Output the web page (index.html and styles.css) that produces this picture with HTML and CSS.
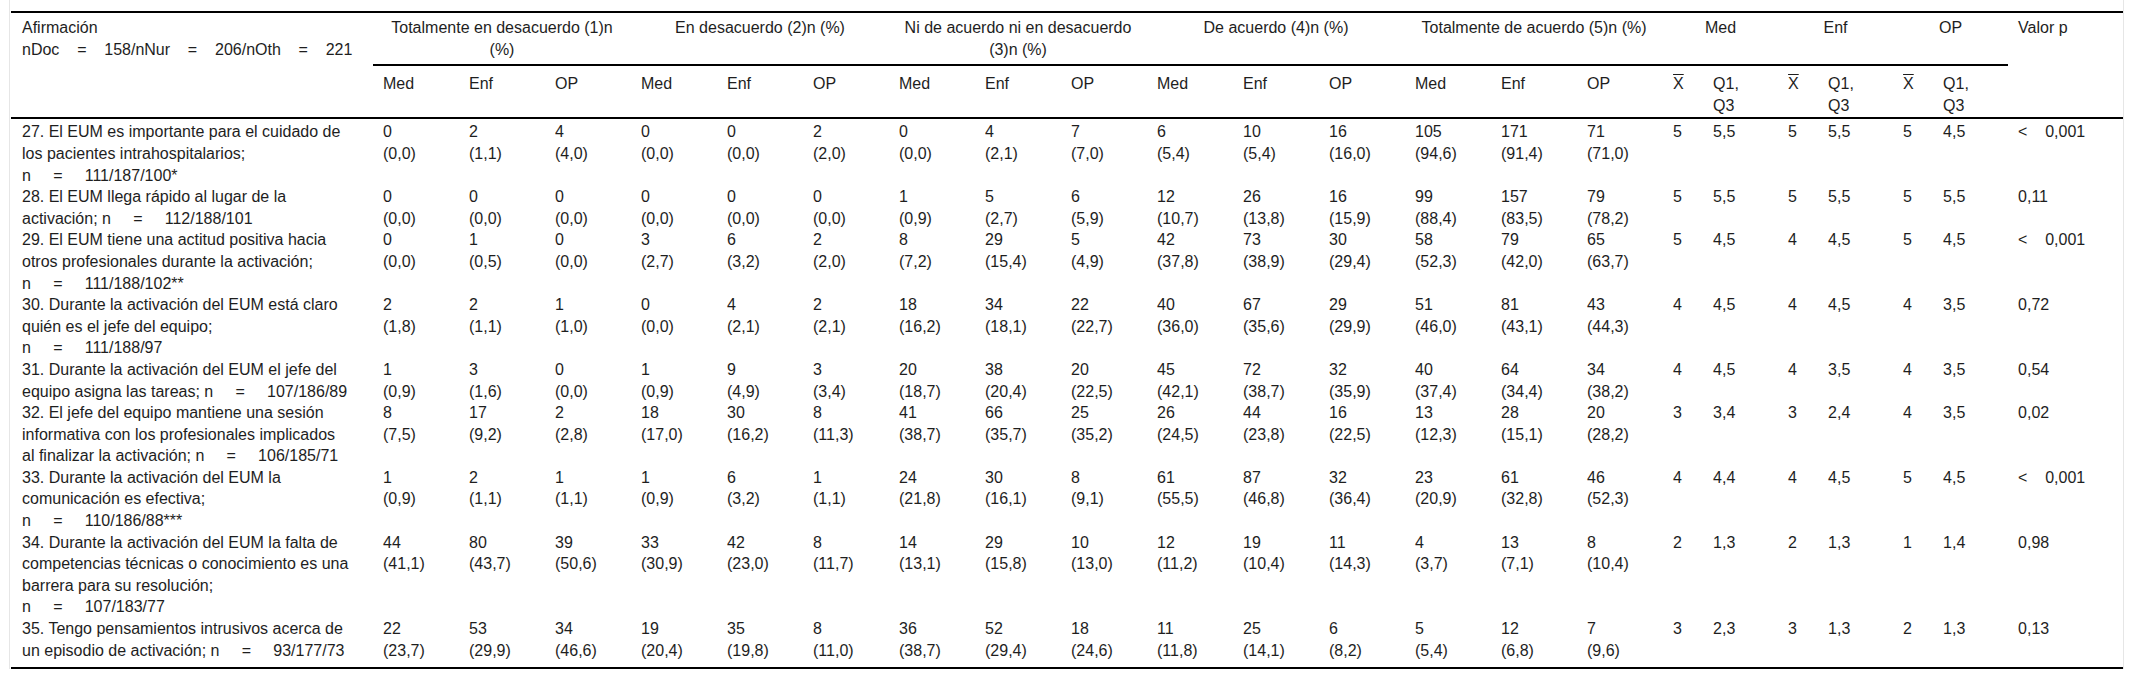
FILE: index.html
```html
<!DOCTYPE html>
<html lang="es">
<head>
<meta charset="utf-8">
<title>Tabla EUM</title>
<link rel="stylesheet" href="styles.css">
</head>
<body>
<div class="frame">
<table class="survey">
  <colgroup>
    <col class="c-aff">
    <col class="c-n"><col class="c-n"><col class="c-n">
    <col class="c-n"><col class="c-n"><col class="c-n">
    <col class="c-n"><col class="c-n"><col class="c-n">
    <col class="c-n"><col class="c-n"><col class="c-n">
    <col class="c-n"><col class="c-n"><col class="c-n">
    <col class="c-x"><col class="c-q">
    <col class="c-x"><col class="c-q">
    <col class="c-x"><col class="c-q">
    <col class="c-p">
  </colgroup>
  <thead>
    <tr class="h1">
      <th rowspan="2" class="aff">Afirmación<br><span class="nowrap">nDoc&nbsp;&nbsp;&nbsp;&nbsp;=&nbsp;&nbsp;&nbsp;&nbsp;158/nNur&nbsp;&nbsp;&nbsp;&nbsp;=&nbsp;&nbsp;&nbsp;&nbsp;206/nOth&nbsp;&nbsp;&nbsp;&nbsp;=&nbsp;&nbsp;&nbsp;&nbsp;221</span></th>
      <th colspan="3" class="grp">Totalmente en desacuerdo (1)n (%)</th>
      <th colspan="3" class="grp">En desacuerdo (2)n (%)</th>
      <th colspan="3" class="grp">Ni de acuerdo ni en desacuerdo (3)n (%)</th>
      <th colspan="3" class="grp">De acuerdo (4)n (%)</th>
      <th colspan="3" class="grp">Totalmente de acuerdo (5)n (%)</th>
      <th colspan="2" class="grp">Med</th>
      <th colspan="2" class="grp">Enf</th>
      <th colspan="2" class="grp">OP</th>
      <th rowspan="2" class="pv">Valor p</th>
    </tr>
    <tr class="h2">
      <th>Med</th><th>Enf</th><th>OP</th>
      <th>Med</th><th>Enf</th><th>OP</th>
      <th>Med</th><th>Enf</th><th>OP</th>
      <th>Med</th><th>Enf</th><th>OP</th>
      <th>Med</th><th>Enf</th><th>OP</th>
      <th class="xbar">X</th><th>Q1,<br>Q3</th>
      <th class="xbar">X</th><th>Q1,<br>Q3</th>
      <th class="xbar">X</th><th>Q1,<br>Q3</th>
    </tr>
  </thead>
  <tbody>
    <tr>
      <td class="aff">27. El EUM es importante para el cuidado de los pacientes intrahospitalarios; <span class="nowrap">n&nbsp;&nbsp;&nbsp;&nbsp;&nbsp;=&nbsp;&nbsp;&nbsp;&nbsp;&nbsp;111/187/100*</span></td>
      <td>0<br>(0,0)</td><td>2<br>(1,1)</td><td>4<br>(4,0)</td>
      <td>0<br>(0,0)</td><td>0<br>(0,0)</td><td>2<br>(2,0)</td>
      <td>0<br>(0,0)</td><td>4<br>(2,1)</td><td>7<br>(7,0)</td>
      <td>6<br>(5,4)</td><td>10<br>(5,4)</td><td>16<br>(16,0)</td>
      <td>105<br>(94,6)</td><td>171<br>(91,4)</td><td>71<br>(71,0)</td>
      <td>5</td><td>5,5</td><td>5</td><td>5,5</td><td>5</td><td>4,5</td>
      <td class="nowrap">&lt;&nbsp;&nbsp;&nbsp;&nbsp;0,001</td>
    </tr>
    <tr>
      <td class="aff">28. El EUM llega rápido al lugar de la activación; <span class="nowrap">n&nbsp;&nbsp;&nbsp;&nbsp;&nbsp;=&nbsp;&nbsp;&nbsp;&nbsp;&nbsp;112/188/101</span></td>
      <td>0<br>(0,0)</td><td>0<br>(0,0)</td><td>0<br>(0,0)</td>
      <td>0<br>(0,0)</td><td>0<br>(0,0)</td><td>0<br>(0,0)</td>
      <td>1<br>(0,9)</td><td>5<br>(2,7)</td><td>6<br>(5,9)</td>
      <td>12<br>(10,7)</td><td>26<br>(13,8)</td><td>16<br>(15,9)</td>
      <td>99<br>(88,4)</td><td>157<br>(83,5)</td><td>79<br>(78,2)</td>
      <td>5</td><td>5,5</td><td>5</td><td>5,5</td><td>5</td><td>5,5</td>
      <td>0,11</td>
    </tr>
    <tr>
      <td class="aff">29. El EUM tiene una actitud positiva hacia otros profesionales durante la activación; <span class="nowrap">n&nbsp;&nbsp;&nbsp;&nbsp;&nbsp;=&nbsp;&nbsp;&nbsp;&nbsp;&nbsp;111/188/102**</span></td>
      <td>0<br>(0,0)</td><td>1<br>(0,5)</td><td>0<br>(0,0)</td>
      <td>3<br>(2,7)</td><td>6<br>(3,2)</td><td>2<br>(2,0)</td>
      <td>8<br>(7,2)</td><td>29<br>(15,4)</td><td>5<br>(4,9)</td>
      <td>42<br>(37,8)</td><td>73<br>(38,9)</td><td>30<br>(29,4)</td>
      <td>58<br>(52,3)</td><td>79<br>(42,0)</td><td>65<br>(63,7)</td>
      <td>5</td><td>4,5</td><td>4</td><td>4,5</td><td>5</td><td>4,5</td>
      <td class="nowrap">&lt;&nbsp;&nbsp;&nbsp;&nbsp;0,001</td>
    </tr>
    <tr>
      <td class="aff">30. Durante la activación del EUM está claro quién es el jefe del equipo; <span class="nowrap">n&nbsp;&nbsp;&nbsp;&nbsp;&nbsp;=&nbsp;&nbsp;&nbsp;&nbsp;&nbsp;111/188/97</span></td>
      <td>2<br>(1,8)</td><td>2<br>(1,1)</td><td>1<br>(1,0)</td>
      <td>0<br>(0,0)</td><td>4<br>(2,1)</td><td>2<br>(2,1)</td>
      <td>18<br>(16,2)</td><td>34<br>(18,1)</td><td>22<br>(22,7)</td>
      <td>40<br>(36,0)</td><td>67<br>(35,6)</td><td>29<br>(29,9)</td>
      <td>51<br>(46,0)</td><td>81<br>(43,1)</td><td>43<br>(44,3)</td>
      <td>4</td><td>4,5</td><td>4</td><td>4,5</td><td>4</td><td>3,5</td>
      <td>0,72</td>
    </tr>
    <tr>
      <td class="aff">31. Durante la activación del EUM el jefe del equipo asigna las tareas; <span class="nowrap">n&nbsp;&nbsp;&nbsp;&nbsp;&nbsp;=&nbsp;&nbsp;&nbsp;&nbsp;&nbsp;107/186/89</span></td>
      <td>1<br>(0,9)</td><td>3<br>(1,6)</td><td>0<br>(0,0)</td>
      <td>1<br>(0,9)</td><td>9<br>(4,9)</td><td>3<br>(3,4)</td>
      <td>20<br>(18,7)</td><td>38<br>(20,4)</td><td>20<br>(22,5)</td>
      <td>45<br>(42,1)</td><td>72<br>(38,7)</td><td>32<br>(35,9)</td>
      <td>40<br>(37,4)</td><td>64<br>(34,4)</td><td>34<br>(38,2)</td>
      <td>4</td><td>4,5</td><td>4</td><td>3,5</td><td>4</td><td>3,5</td>
      <td>0,54</td>
    </tr>
    <tr>
      <td class="aff">32. El jefe del equipo mantiene una sesión informativa con los profesionales implicados al finalizar la activación; <span class="nowrap">n&nbsp;&nbsp;&nbsp;&nbsp;&nbsp;=&nbsp;&nbsp;&nbsp;&nbsp;&nbsp;106/185/71</span></td>
      <td>8<br>(7,5)</td><td>17<br>(9,2)</td><td>2<br>(2,8)</td>
      <td>18<br>(17,0)</td><td>30<br>(16,2)</td><td>8<br>(11,3)</td>
      <td>41<br>(38,7)</td><td>66<br>(35,7)</td><td>25<br>(35,2)</td>
      <td>26<br>(24,5)</td><td>44<br>(23,8)</td><td>16<br>(22,5)</td>
      <td>13<br>(12,3)</td><td>28<br>(15,1)</td><td>20<br>(28,2)</td>
      <td>3</td><td>3,4</td><td>3</td><td>2,4</td><td>4</td><td>3,5</td>
      <td>0,02</td>
    </tr>
    <tr>
      <td class="aff">33. Durante la activación del EUM la comunicación es efectiva; <span class="nowrap">n&nbsp;&nbsp;&nbsp;&nbsp;&nbsp;=&nbsp;&nbsp;&nbsp;&nbsp;&nbsp;110/186/88***</span></td>
      <td>1<br>(0,9)</td><td>2<br>(1,1)</td><td>1<br>(1,1)</td>
      <td>1<br>(0,9)</td><td>6<br>(3,2)</td><td>1<br>(1,1)</td>
      <td>24<br>(21,8)</td><td>30<br>(16,1)</td><td>8<br>(9,1)</td>
      <td>61<br>(55,5)</td><td>87<br>(46,8)</td><td>32<br>(36,4)</td>
      <td>23<br>(20,9)</td><td>61<br>(32,8)</td><td>46<br>(52,3)</td>
      <td>4</td><td>4,4</td><td>4</td><td>4,5</td><td>5</td><td>4,5</td>
      <td class="nowrap">&lt;&nbsp;&nbsp;&nbsp;&nbsp;0,001</td>
    </tr>
    <tr>
      <td class="aff">34. Durante la activación del EUM la falta de competencias técnicas o conocimiento es una barrera para su resolución; <span class="nowrap">n&nbsp;&nbsp;&nbsp;&nbsp;&nbsp;=&nbsp;&nbsp;&nbsp;&nbsp;&nbsp;107/183/77</span></td>
      <td>44<br>(41,1)</td><td>80<br>(43,7)</td><td>39<br>(50,6)</td>
      <td>33<br>(30,9)</td><td>42<br>(23,0)</td><td>8<br>(11,7)</td>
      <td>14<br>(13,1)</td><td>29<br>(15,8)</td><td>10<br>(13,0)</td>
      <td>12<br>(11,2)</td><td>19<br>(10,4)</td><td>11<br>(14,3)</td>
      <td>4<br>(3,7)</td><td>13<br>(7,1)</td><td>8<br>(10,4)</td>
      <td>2</td><td>1,3</td><td>2</td><td>1,3</td><td>1</td><td>1,4</td>
      <td>0,98</td>
    </tr>
    <tr class="last">
      <td class="aff">35. Tengo pensamientos intrusivos acerca de un episodio de activación; <span class="nowrap">n&nbsp;&nbsp;&nbsp;&nbsp;&nbsp;=&nbsp;&nbsp;&nbsp;&nbsp;&nbsp;93/177/73</span></td>
      <td>22<br>(23,7)</td><td>53<br>(29,9)</td><td>34<br>(46,6)</td>
      <td>19<br>(20,4)</td><td>35<br>(19,8)</td><td>8<br>(11,0)</td>
      <td>36<br>(38,7)</td><td>52<br>(29,4)</td><td>18<br>(24,6)</td>
      <td>11<br>(11,8)</td><td>25<br>(14,1)</td><td>6<br>(8,2)</td>
      <td>5<br>(5,4)</td><td>12<br>(6,8)</td><td>7<br>(9,6)</td>
      <td>3</td><td>2,3</td><td>3</td><td>1,3</td><td>2</td><td>1,3</td>
      <td>0,13</td>
    </tr>
  </tbody>
</table>
</div>
</body>
</html>
```

FILE: styles.css
```css
html, body {
  margin: 0;
  padding: 0;
  background: #ffffff;
}

body {
  font-family: "Liberation Sans", Arial, sans-serif;
  font-size: 16px;
  line-height: 21.6px;
  color: #1e1e1e;
}

.frame {
  margin: 0 10px 0 9px;
  padding-top: 11px;
  min-height: 669px;
  box-sizing: border-box;
  border-left: 1px solid #e6e6e6;
  border-right: 1px solid #e6e6e6;
}

.survey {
  margin-left: 1px;
  width: 2112px;
  table-layout: fixed;
  border-collapse: collapse;
  border-top: 2px solid #000;
  border-bottom: 2px solid #000;
}

.c-aff { width: 362px; }
.c-n { width: 86px; }
.c-x { width: 40px; }
.c-q { width: 75px; }
.c-p { width: 115px; }

.survey th,
.survey td {
  text-align: left;
  vertical-align: top;
  font-weight: normal;
  padding: 0 8px 0 10px;
}

.survey th.aff,
.survey td.aff {
  padding-left: 11px;
  padding-right: 23px;
}

.survey .h1 th {
  padding-top: 4px;
  padding-bottom: 4px;
}

.survey .h2 th {
  padding-top: 7px;
  padding-bottom: 1px;
}

.survey .h1 .grp {
  text-align: center;
  border-bottom: 2px solid #000;
  padding-left: 10px;
  padding-right: 10px;
}

.survey .h1 .aff,
.survey .h1 .pv,
.survey .h2 th {
  border-bottom: 2px solid #000;
}

.survey tbody tr:first-child td {
  padding-top: 2px;
}

.survey tbody tr.last td {
  padding-bottom: 6px;
}

.nowrap {
  white-space: nowrap;
}

.xbar {
  text-decoration: overline;
}
```
